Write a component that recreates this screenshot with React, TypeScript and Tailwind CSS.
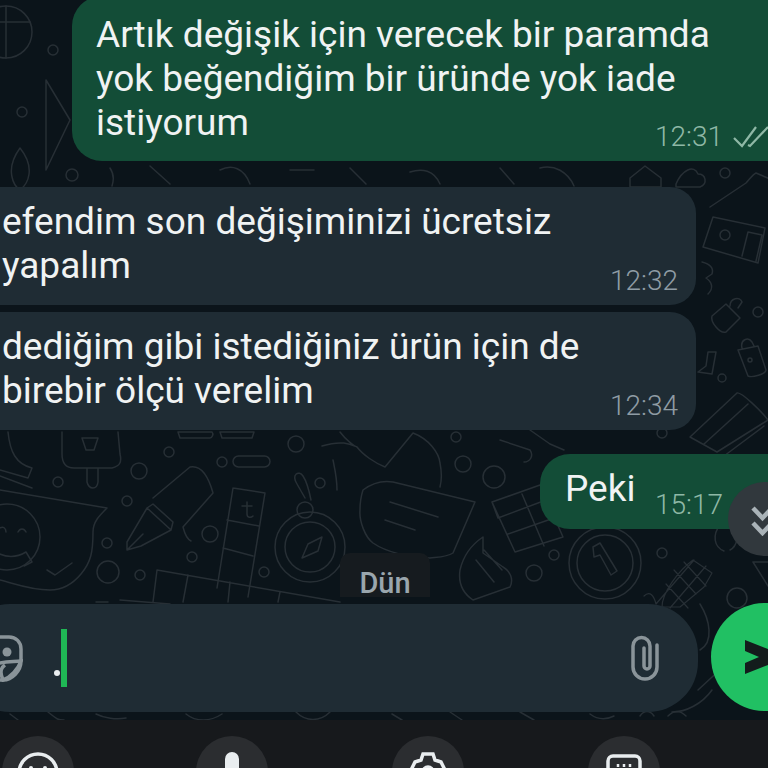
function Ticks() {
  return (
    <svg width="38" height="24" viewBox="0 0 38 24" fill="none" stroke="#8fb8a6" strokeWidth="2.2" className="shrink-0">
      <path d="M2 13l8 8L24 2" />
      <path d="M16 20l2 1L36 2" />
    </svg>
  );
}

const dots: [number, number, number][] = [
  [53, 50, 5], [22, 112, 5], [72, 175, 6], [725, 173, 5], [758, 312, 5], [722, 378, 4],
  [58, 482, 5], [139, 471, 8], [169, 452, 5], [222, 462, 5], [296, 444, 8], [127, 501, 5],
  [107, 543, 5], [210, 534, 8], [192, 557, 5], [108, 572, 11], [140, 575, 5], [264, 572, 5],
  [320, 483, 5], [463, 464, 8], [494, 477, 11], [456, 437, 5], [662, 433, 5], [554, 555, 5],
  [534, 573, 8], [662, 553, 5], [737, 598, 10], [305, 510, 8], [725, 235, 5],
];

function Wallpaper() {
  return (
    <svg className="absolute inset-0" width="768" height="768" viewBox="0 0 768 768" fill="none" stroke="#272f35" strokeWidth="1.5" strokeLinejoin="round" strokeLinecap="round">
      {dots.map(([cx, cy, r]) => (
        <circle key={`${cx}-${cy}`} cx={cx} cy={cy} r={r} />
      ))}
      {/* left edge, top */}
      <circle cx="6" cy="32" r="26" />
      <path d="M-10 22h40M6 6v52" />
      <path d="M46 80l24 40-24 50z" />
      <path d="M20 148c-16 22-6 38 0 42 8-6 16-22 0-42zM0 200c10 14 40 14 50 0l-6 40H6z" />
      {/* strip under the first bubble */}
      <path d="M110 168c4 6 4 12 2 18M150 166l20 18M220 170c12-6 24-2 30 14M290 170h24M350 168l16 16M410 172c12-4 24-2 30 12M500 168l14 16M540 168c14-4 28 4 34 18" />
      <path d="M630 178l15-12 16 12v9h-31z" />
      <path d="M676 184c6-14 18-20 22-10 8 0 10 10 2 13h-24z" />
      {/* house, locks and card on the right */}
      <path d="M710 207l36-24c4-4 6-8 10-10l14 6M713 217l52 11-7 35-55-16zM742 256l6-24 14 3-6 26" />
      <path d="M702 262c8 2 12 6 10 12l-6 4c6 4 8 10 2 16" />
      <path d="M712 316l14-12 14 14-14 14c-6 2-16-10-14-16zM730 306c0-8 10-10 12-4l-4 6" />
      <path d="M738 350l20-4 8 24c0 4-14 8-18 6zM742 348c-2-8 6-12 10-6l2 4" />
      <circle cx="750" cy="360" r="2" />
      <path d="M708 352l-2 14-8 6 14 2 4-22z" />
      <path d="M690 437l47-44c4-2 26 20 31 27l-51 32zM704 444l44-40M724 456l40-30" />
      {/* ice cream */}
      <path d="M62 432v22c0 10 4 14 12 14h38c8-2 10-6 8-14l-2-22M87 468v14c2 8 10 8 11 0v-14" />
      <path d="M82 438h16l-4 12h-8z" />
      <path d="M8 432c2 20 8 32 24 36l-4 10-28-8M0 476l32 12" />
      <path d="M178 432h34c2 2 0 6-2 6h-30zM220 432h34l-2 6h-30z" />
      <rect x="233" y="456" width="37" height="11" rx="5.5" />
      {/* big rounded shape with smiley */}
      <path d="M0 490l107 18c-8 8-14 14-14 24 0 20-2 30-12 42-10 12-20 16-31 16-20 0-34-6-50-10" />
      <circle cx="7" cy="537" r="33" />
      <path d="M0 528c3-2 6 0 6 4M18 532c2-4 6-4 8 0M-4 552c10 6 20 6 30 0l6 10-8 4" />
      <path d="M47 570l8 5 17-12" />
      {/* pen */}
      <path d="M153 498l37-31c10-2 18 8 23 26l-30 34M147 508l6-4 20 18-2 8zM147 508l-20 34 0 8 14-4 30-16M127 550l16-16M183 527c2 8 4 12 8 14" />
      {/* ruler */}
      <path d="M233 488l32 5-17 104M233 488l-16 100M227 520l32 6M223 548l30 8M247 502v12c0 4 4 4 6 2M242 506h10" />
      {/* lower panel */}
      <path d="M157 570l183 32M157 570l-4 32M188 575l-5 27M230 582l-2 20M280 592l-2 10" />
      <path d="M120 600l50 4M96 602h12" />
      {/* compass */}
      <circle cx="310" cy="547" r="35" />
      <circle cx="310" cy="547" r="25" />
      <path d="M322 537l-4 14-16 7 6-14z" />
      <path d="M305 498l-8-14c-6-10 2-14 6-8 4 6 6 14 8 24" />
      {/* shield and chat bubble */}
      <path d="M333 460c2 10 4 18 4 30M322 446c20-6 28-2 35 1M357 447c6 8 18 16 28 20l28-34c16 6 26 20 27 30 2 10 2 16 0 24M340 432c6 8 14 14 17 15" />
      <path d="M363 490c8-6 18-10 30-8l82 20-22 51c-6 4-14 4-23 5-20 0-44-6-57-15-8-6-14-22-13-33 0-8 1-14 3-20z" />
      <path d="M390 502l48 15M385 520l30 10" />
      {/* gift */}
      <path d="M492 502l48-17 23 52-48 15zM492 502l6 16 48-18M522 494l22 52M508 534l46-16" />
      <path d="M530 430l20 14 14 6M500 440l30 10c4 6 0 12-6 12" />
      {/* thumb */}
      <path d="M483 537c-12 8-20 20-23 33-2 14 4 24 13 30l37-13c4-8 0-16-7-20l-20-14zM484 550l18 20M476 560l18 22" />
      {/* clock */}
      <circle cx="605" cy="563" r="36" />
      <circle cx="605" cy="563" r="28" />
      <path d="M593 547l7-4 17 28-6 4-11-20-6 2z" />
      <path d="M720 525c-8 10-6 22 4 26M738 520c0 16 0 26-8 30" />
      <path d="M600 470c20 18 40 28 70 14" />
      {/* corn */}
      <path d="M693 560l19 13-8 14-24 20h-18c0-14 16-36 31-47zM656 604c-2-8-6-14-12-8M674 570l22 24M684 562l22 24M666 584l22 24M706 566l-36 42M694 560l-38 44" strokeWidth="1.2" />
      <path d="M753 562l15 24M753 562h15" />
      {/* under the input bar */}
      <path d="M10 714l8 6M48 712c10 8 10 8 16 8M96 714c8 4 20 6 30 4M186 714c10 8 24 8 36 0M296 712c10 10 24 10 34 0M392 714l10 6M450 712l12 8M520 712l14 8M590 714c8 6 16 6 24 2M640 716c4-6 10-6 14 0M668 716c6-6 12-6 18 0" />
      <path d="M698 690l26-24M700 650c14-8 10-30 0-46M672 712c14 0 30-8 40-22" />
    </svg>
  );
}

type BubbleProps = {
  lines: string[];
  time: string;
  sent?: boolean;
  className: string;
};

function Bubble({ lines, time, sent, className }: BubbleProps) {
  return (
    <div className={`relative shrink-0 ${sent ? "bg-[#134d37]" : "bg-[#1f2c34]"} ${className}`}>
      {lines.map((l) => (
        <div key={l} className="h-[44px] text-[37px] leading-[44px] whitespace-nowrap text-[#f0f3f3]">
          {l}
        </div>
      ))}
      <div className={`absolute bottom-[6px] flex items-center gap-[9px] text-[28px] leading-[36px] font-light ${sent ? "left-[var(--meta)] text-[#8fb8a6]" : "right-[18px] text-[#8f9ca4]"}`}>
        {time}
        {sent && time === "12:31" ? <Ticks /> : null}
      </div>
    </div>
  );
}

function KeyButton({ children }: { children: React.ReactNode }) {
  return (
    <div className="flex h-[72px] w-[72px] shrink-0 justify-center rounded-full bg-[#2b2d30] pt-[16px]">
      {children}
    </div>
  );
}

export default function App() {
  return (
    <div className="relative flex h-[768px] w-[768px] flex-col overflow-hidden bg-[#0b141a] font-['Roboto',sans-serif]">
      <Wallpaper />

      {/* messages */}
      <div className="relative flex h-[604px] shrink-0 flex-col overflow-hidden">
        <Bubble
          sent
          time="12:31"
          lines={["Artık değişik için verecek bir paramda", "yok beğendiğim bir üründe yok iade", "istiyorum"]}
          className="mt-[-4px] ml-[72px] h-[165px] w-[720px] rounded-l-[30px] pt-[17px] pl-[24px] [--meta:583px]"
        />
        <Bubble
          time="12:32"
          lines={["efendim son değişiminizi ücretsiz", "yapalım"]}
          className="mt-[26px] ml-[-30px] h-[118px] w-[726px] rounded-[26px] pt-[13px] pl-[32px]"
        />
        <Bubble
          time="12:34"
          lines={["dediğim gibi istediğiniz ürün için de", "birebir ölçü verelim"]}
          className="mt-[7px] ml-[-30px] h-[118px] w-[726px] rounded-[26px] pt-[13px] pl-[32px]"
        />
        <Bubble
          sent
          time="15:17"
          lines={["Peki"]}
          className="mt-[24px] ml-[540px] h-[75px] w-[260px] rounded-l-[30px] pt-[13px] pl-[25px] [--meta:115px]"
        />
        {/* date chip */}
        <div className="mt-[24px] ml-[340px] h-[44px] w-[90px] shrink-0 rounded-t-[10px] bg-[#161b1f] pt-[16px] text-center text-[29px] leading-[28px] font-medium text-[#9aa6ad]">
          Dün
        </div>
        <div className="absolute top-[482px] left-[728px] flex h-[74px] w-[74px] items-start rounded-full bg-[#31383d] pt-[24px] pl-[23px]">
          <svg width="24" height="30" viewBox="0 0 24 30" fill="none" stroke="#aab3b8" strokeWidth="4.5" className="shrink-0">
            <path d="M2 2l9.500 10L21 2M2 17l9.500 10L21 17" />
          </svg>
        </div>
      </div>

      {/* input row */}
      <div className="relative flex h-[116px] shrink-0 items-start">
        <div className="ml-[-40px] flex h-[108px] w-[738px] shrink-0 items-center rounded-[50px] bg-[#1f2c34]">
          <svg width="46" height="48" viewBox="0 0 46 48" fill="none" className="ml-[17px] shrink-0" stroke="#8a9499" strokeWidth="3.5">
            <path d="M6 3h26c7 0 12 5 12 12v12c0 10-9 19-18 19H6C2 46 0 30 0 24S2 3 6 3z" />
            <circle cx="30" cy="18" r="4.5" fill="#8a9499" stroke="none" />
            <path d="M14 31c8-3 18-3 30-4-3 8-10 16-18 19-2-5-4-11 2-15" />
          </svg>
          <div className="ml-[31px] flex h-[58px] shrink-0 items-end">
            <div className="mb-[11px] h-[6px] w-[6px] rounded-full bg-[#e9edef]" />
            <div className="ml-[1px] h-[58px] w-[6px] bg-[#1fb855]" />
          </div>
          <svg width="30" height="46" viewBox="0 0 30 46" fill="none" stroke="#8a9499" strokeWidth="3.5" strokeLinecap="round" className="ml-auto mr-[38px] shrink-0">
            <path d="M27 10v22a12 12 0 01-24 0V11a8.500 8.500 0 0117 0v20a3 3 0 01-6 0V13" />
          </svg>
        </div>
        <div className="mt-[-1px] ml-[13px] flex h-[108px] w-[108px] shrink-0 items-center rounded-full bg-[#21c063] pl-[34px]">
          <svg width="48" height="34" viewBox="0 0 48 34" fill="#131c1c" className="shrink-0">
            <path d="M0 0l23 9 25 8-25 8-23 9V23l14-6-14-6z" />
          </svg>
        </div>
      </div>

      {/* keyboard toolbar */}
      <div className="relative flex min-h-0 flex-1 items-start overflow-hidden bg-[#17191c] pt-[16px] pl-[2px]">
        <KeyButton>
          <svg width="42" height="42" viewBox="0 0 42 42" fill="none" stroke="#e9edef" strokeWidth="3.5" className="shrink-0">
            <circle cx="21" cy="21" r="19" />
            <circle cx="14" cy="16" r="2" fill="#e9edef" stroke="none" />
            <circle cx="28" cy="16" r="2" fill="#e9edef" stroke="none" />
          </svg>
        </KeyButton>
        <div className="ml-[122px]">
          <KeyButton>
            <div className="h-[40px] w-[14px] shrink-0 rounded-full bg-[#e9edef]" />
          </KeyButton>
        </div>
        <div className="ml-[124px]">
          <KeyButton>
            <svg width="40" height="40" viewBox="0 0 40 40" fill="none" stroke="#e9edef" strokeWidth="3.5" className="shrink-0">
              <path d="M15 2h10l2 6 6 2 4 8-4 6v8H7v-8l-4-6 4-8 6-2z" />
              <circle cx="20" cy="20" r="5" />
            </svg>
          </KeyButton>
        </div>
        <div className="ml-[124px]">
          <KeyButton>
            <svg width="38" height="40" viewBox="0 0 38 40" fill="none" stroke="#e9edef" strokeWidth="3.5" className="mt-[2px] shrink-0">
              <rect x="3" y="2" width="32" height="36" rx="5" />
              <path d="M13 10v3M19 10v3M25 10v3" strokeWidth="2.5" />
            </svg>
          </KeyButton>
        </div>
      </div>
    </div>
  );
}
